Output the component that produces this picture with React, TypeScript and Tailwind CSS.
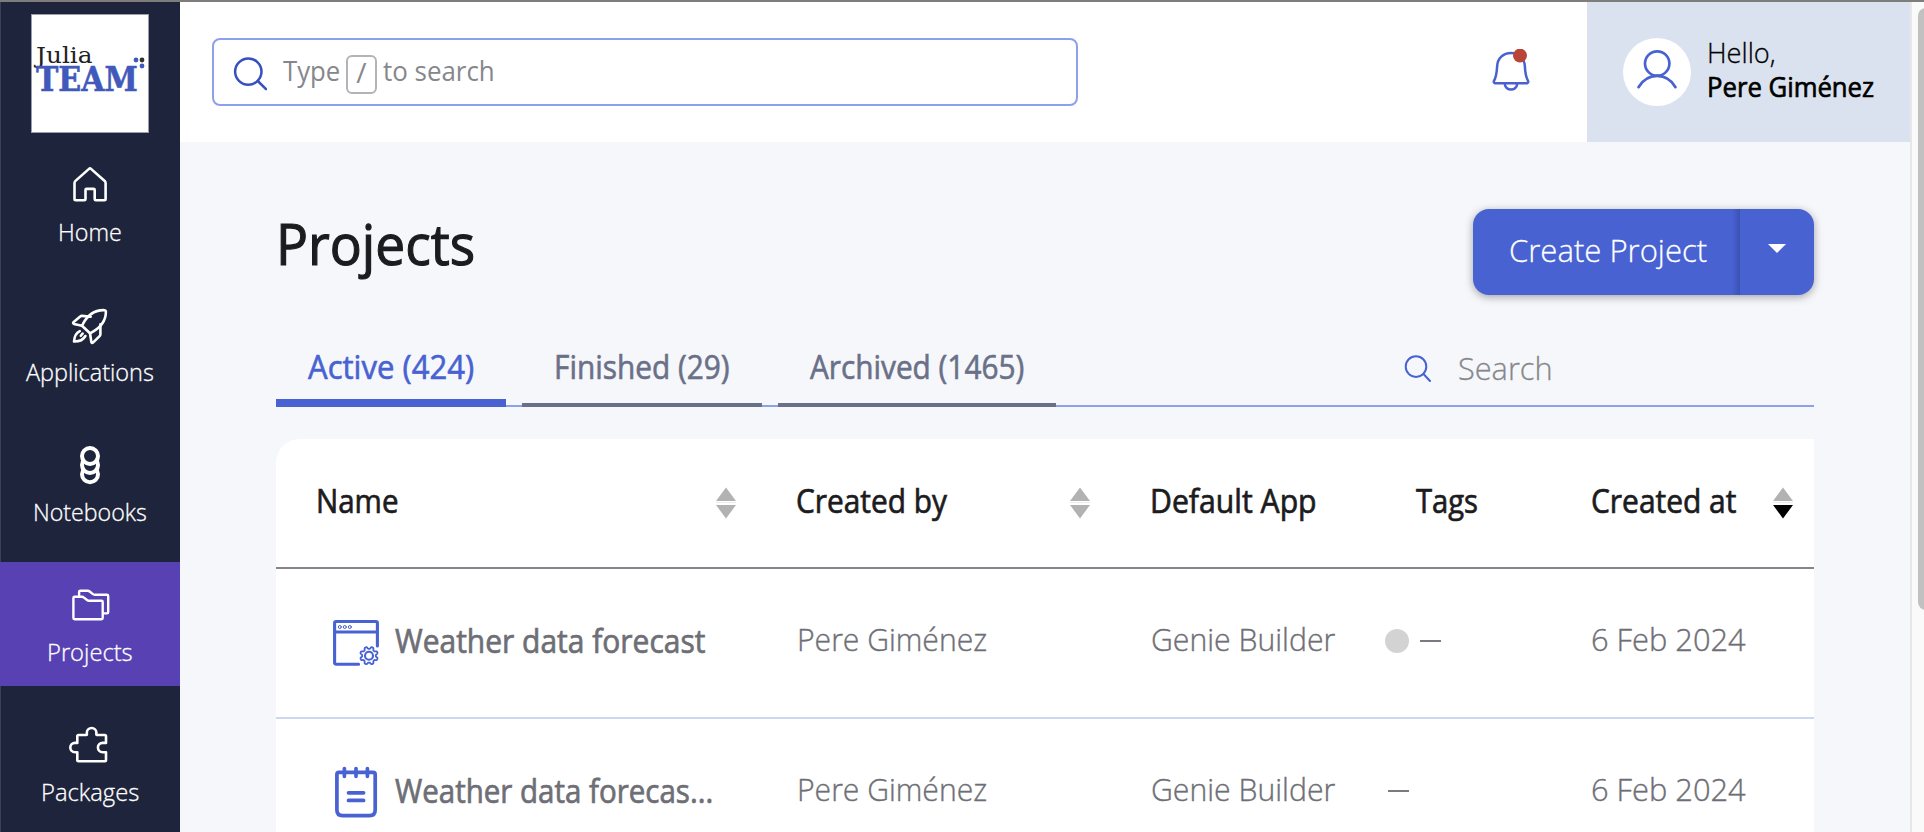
import { useLayoutEffect, useRef, type ReactNode } from "react";
import clsx from "clsx";

/** One line of text squeezed horizontally to the width of its box. */
function Fit({ children, className }: { children: string; className?: string }) {
  const box = useRef<HTMLSpanElement>(null);
  const text = useRef<HTMLSpanElement>(null);
  useLayoutEffect(() => {
    if (!box.current || !text.current) return;
    const ratio = box.current.clientWidth / text.current.offsetWidth;
    text.current.style.transform = `scaleX(${ratio})`;
  }, [children]);
  return (
    <span ref={box} className={clsx("block shrink-0 whitespace-nowrap", className)}>
      <span ref={text} className="inline-block origin-left">{children}</span>
    </span>
  );
}

function Stroke({ className, children, width = 2.6 }: { className: string; children: ReactNode; width?: number }) {
  return (
    <svg className={clsx("block shrink-0", className)} fill="none" stroke="currentColor" strokeWidth={width} strokeLinecap="round" strokeLinejoin="round">
      {children}
    </svg>
  );
}

const HomeIcon = () => (
  <Stroke className="h-10 w-10">
    <path d="M4.5 19Q4.5 17.8 5.5 16.9L19 4.9Q20 4 21 4.9L34.7 16.9Q35.6 17.8 35.6 19V35Q35.6 36.2 34.4 36.2H25.8Q24.7 36.2 24.7 35V26Q24.7 24.9 23.6 24.9H16.6Q15.5 24.9 15.5 26V35Q15.5 36.2 14.4 36.2H5.7Q4.5 36.2 4.5 35Z" />
  </Stroke>
);

const RocketIcon = () => (
  <Stroke className="mt-[2px] h-10 w-10">
    <path d="M12 19.7C16.5 10.5 24 3.7 34.6 4.2Q35.8 4.3 35.9 5.5C36 15 30 22.3 20 27.3Z" />
    <path d="M20.7 10.7L12.2 9.9Q11 9.8 10.2 10.6L3.4 16.3Q2.6 17.3 3.9 17.9L12 19.7M30.4 18.3V28.2Q30.4 29.4 29.6 30.2L23 36.6Q22 37.4 21.4 36.2L20 27.3" />
    <path d="M9.8 25.2C5.6 27.2 4.3 31 4 35.5C9 35.6 13.2 33.9 15.4 30M10.8 29.8L12.6 27.6" />
  </Stroke>
);

const NotebookIcon = () => (
  <Stroke className="mt-[1px] h-10 w-10" width={4}>
    <circle cx="20" cy="29.3" r="8" fill="#1d243b" />
    <circle cx="20" cy="20" r="8" fill="#1d243b" />
    <circle cx="20" cy="11" r="8" fill="#1d243b" />
  </Stroke>
);

const FoldersIcon = () => (
  <Stroke className="mt-[3px] h-10 w-10" width={2.4}>
    <path d="M4.6 9.7H11.8Q13 9.7 14 10.6L17 13Q18 13.8 19.3 13.8H31.6Q32.7 13.8 32.7 15V31Q32.7 32.2 31.5 32.2H4.6Q3.4 32.2 3.4 31V10.9Q3.4 9.7 4.6 9.7Z" />
    <path d="M9.1 9V4.9Q9.1 3.7 10.3 3.7H17.8Q18.8 3.7 19.7 4.5L22.6 6.9Q23.5 7.7 24.8 7.7H37Q38.2 7.7 38.2 8.9V25.2Q38.2 26.4 37 26.4H34" />
  </Stroke>
);

const PuzzleIcon = () => (
  <Stroke className="-ml-1 -mt-[1px] h-11 w-11">
    <path d="M11.3 13.2Q11.3 12 12.5 12H20.3C21.3 12 20.8 10.5 20.8 9.8A4.8 4.8 0 0 1 30.4 9.8C30.4 10.5 30 12 31 12H38.8Q40 12 40 13.2V19.9H36.6A4.7 4.7 0 0 0 36.6 29.3H40V37.1Q40 38.3 38.8 38.3H12.5Q11.3 38.3 11.3 37.1V29.3H9A4.7 4.7 0 0 1 9 19.9H11.3Z" />
  </Stroke>
);

const gear = Array.from({ length: 97 }, (_, i) => {
  const a = (i / 96) * Math.PI * 2;
  const r = 7.9 + 1.1 * Math.tanh(2 * Math.cos(8 * (a - Math.PI / 8)));
  return `${i ? "L" : "M"}${(39 + r * Math.cos(a)).toFixed(2)} ${(40.7 + r * Math.sin(a)).toFixed(2)}`;
}).join("");

const AppIcon = () => (
  <Stroke className="h-14 w-14 text-[#4862d2]" width={3.1}>
    <path d="M47.4 31V8.1Q47.4 6.5 45.8 6.5H6.2Q4.6 6.5 4.6 8.1V47.6Q4.6 49.2 6.2 49.2H28.6M4.6 17H47.4" />
    <g strokeWidth="1"><circle cx="9.8" cy="12" r="1.5" /><circle cx="14.8" cy="12" r="1.5" /><circle cx="19.8" cy="12" r="1.5" /></g>
    <path d={gear} strokeWidth="1.8" />
    <circle cx="39" cy="40.7" r="4" strokeWidth="2.1" />
  </Stroke>
);

const NoteIcon = () => (
  <Stroke className="h-14 w-14 text-[#4862d2]" width={3.7}>
    <path d="M9 10.3H43Q45.2 10.3 45.2 12.5V48Q45.2 53.6 39.6 53.6H12.6Q6.9 53.6 6.9 48V12.5Q6.9 10.3 9 10.3ZM14.4 6.6V14.3M26 6.6V14.3M37.4 6.6V14.3M18.5 30.8H33.6M18.5 38.4H33.6" />
  </Stroke>
);

function Sort({ active }: { active?: boolean }) {
  return (
    <svg className="mt-1 h-8 w-[22px] shrink-0">
      <path d="M11 0.5L21 14H1Z" fill="#b2b2b2" />
      <path d="M1 15.5H21" stroke="#ececec" />
      <path d="M11 31.5L21 18H1Z" fill={active ? "#000" : "#b2b2b2"} />
    </svg>
  );
}

const nav = [
  { label: "Home", icon: <HomeIcon />, width: "w-[64px]" },
  { label: "Applications", icon: <RocketIcon />, width: "w-[128px]" },
  { label: "Notebooks", icon: <NotebookIcon />, width: "w-[114px]" },
  { label: "Projects", icon: <FoldersIcon />, width: "w-[86px]", active: true },
  { label: "Packages", icon: <PuzzleIcon />, width: "w-[98px]" },
];

function Sidebar() {
  return (
    <aside className="flex w-[180px] shrink-0 flex-col items-center bg-[#1d243b] pt-3 text-white shadow-[inset_1px_0_#3a4157]">
      <div className="relative mb-[9px] h-[119px] w-[118px] shrink-0 border border-[#9a9dab] bg-white pl-1 pt-[26px] font-['DejaVu_Serif',serif]">
        <Fit className="w-14 text-[23px] leading-7 text-[#222]">Julia</Fit>
        <Fit className="-mt-[5px] w-[102px] text-[33px] font-bold leading-8 text-[#4059ba] [-webkit-text-stroke:0.6px]">TEAM</Fit>
        <svg className="absolute right-[3px] top-[42px] h-3 w-3">
          <circle cx="3" cy="3" r="2.4" fill="#4059ba" /><circle cx="9" cy="3" r="2.4" fill="#333" /><circle cx="9" cy="9" r="2.4" fill="#4059ba" />
        </svg>
      </div>
      <nav className="flex w-full flex-col gap-4">
        {nav.map((n) => (
          <a key={n.label} className={clsx("flex h-[124px] shrink-0 flex-col items-center", n.active && "bg-[#5741b3]")}>
            <span className="mt-[22px] flex h-[52px] items-start">{n.icon}</span>
            <Fit className={clsx("text-2xl font-light leading-8 [-webkit-text-stroke:0.3px]", n.width)}>{n.label}</Fit>
          </a>
        ))}
      </nav>
    </aside>
  );
}

function Header() {
  return (
    <header className="flex h-[140px] shrink-0 items-start bg-white">
      <div className="ml-8 mt-9 flex h-[68px] w-[866px] items-start rounded-lg border-2 border-[#8da0ea] text-[28px] leading-[34px] text-[#86878c]">
        <Stroke className="ml-[17px] mt-4 h-9 w-9 text-[#3650bf]" width={2.5}>
          <circle cx="17.3" cy="15.6" r="13.2" /><path d="M26.8 25L35 33.2" />
        </Stroke>
        <Fit className="ml-[16px] mt-[13px] w-[57px]">Type</Fit>
        <span className="ml-[6px] mt-[15px] flex h-[39px] w-[31px] items-start justify-center rounded-md border-2 border-[#b3b3b8] leading-[31px]">/</span>
        <Fit className="ml-[6px] mt-[13px] w-[112px]">to search</Fit>
      </div>
      <Stroke className="ml-auto mr-[53px] mt-[47px] h-11 w-11 text-[#4862d2]" width={2.5}>
        <path d="M5 34.2Q3.2 33.6 4 31.9C6.4 27.5 6.8 23.5 7.1 17.6C7.5 9.5 13.2 3.9 21 3.9S34.5 9.5 34.9 17.6C35.2 23.5 35.6 27.5 38 31.9Q38.8 33.6 37 34.2ZM14.8 35C15.6 42.4 26.4 42.4 27.2 35" />
        <circle cx="30" cy="6.6" r="7" fill="#b94539" stroke="none" />
      </Stroke>
      <div className="flex h-full w-[323px] items-start bg-[#dbe2ef] pl-[36px] pt-9 text-[28px] leading-[34px] text-black">
        <Stroke className="h-[68px] w-[68px] rounded-full bg-white text-[#4862d2]" width={2.7}>
          <circle cx="34.2" cy="25.5" r="12.2" /><path d="M15.500 49.200C24.500 34.200 43.800 34.200 52.500 49.200" />
        </Stroke>
        <div className="ml-4 -mt-[3px]">
          <Fit className="w-[69px] font-light [-webkit-text-stroke:0.3px]">Hello,</Fit>
          <Fit className="w-[167px] font-medium [-webkit-text-stroke:0.7px]">Pere Giménez</Fit>
        </div>
      </div>
    </header>
  );
}

const tabs = [
  { label: "Active (424)", box: "w-[230px] border-b-8 border-[#4862d2] text-[#4862d2]", width: "w-[166px]" },
  { label: "Finished (29)", box: "w-[240px] border-b-4 border-[#6a7088] text-[#6a7088]", width: "w-[176px]" },
  { label: "Archived (1465)", box: "w-[278px] border-b-4 border-[#6a7088] text-[#6a7088]", width: "w-[214px]" },
];

const rows = [
  { name: "Weather data forecast", icon: <AppIcon />, width: "w-[310px]", dot: true },
  { name: "Weather data forecas...", icon: <NoteIcon />, width: "w-[318px]", dot: false },
];

const columns = "grid grid-cols-[481px_354px_237px_203px_263px]";
const cell = "font-light [-webkit-text-stroke:0.4px]";

function Projects() {
  return (
    <main className="flex flex-1 flex-col overflow-hidden pl-24 pr-24 text-[32px] leading-10">
      <div className="mt-[67px] flex h-[86px] shrink-0 items-start justify-between">
        <Fit className="mt-[2px] w-[199px] text-[57px] font-medium leading-[64px] text-[#1c1c1e] [-webkit-text-stroke:1.2px]">Projects</Fit>
        <div className="flex h-[86px] overflow-visible rounded-2xl bg-[#4862d2] text-white shadow-[0_2px_8px_rgba(0,0,0,0.35)]">
          <div className="flex w-[267px] items-start bg-linear-to-r from-transparent from-97% to-[#3b51b4] pl-9 pt-[21px]">
            <Fit className="w-[198px] font-light [-webkit-text-stroke:0.3px]">Create Project</Fit>
          </div>
          <div className="flex w-[74px] justify-center pt-[35px]">
            <svg className="h-[9px] w-[18px]"><path d="M0 0H18L9 9Z" fill="white" /></svg>
          </div>
        </div>
      </div>
      <div className="mt-[52px] flex h-[60px] shrink-0 bg-[linear-gradient(#8da0ea,#8da0ea)] bg-[length:100%_2px] bg-bottom bg-no-repeat">
        <div className="flex gap-4">
          {tabs.map((t) => (
            <div key={t.label} className={clsx("h-[60px] pl-8", t.box)}>
              <Fit className={clsx("font-medium [-webkit-text-stroke:0.6px]", t.width)}>{t.label}</Fit>
            </div>
          ))}
        </div>
        <Stroke className="ml-[348px] mt-[7px] h-7 w-7 text-[#4862d2]" width={2}>
          <circle cx="12" cy="12.6" r="10.3" /><path d="M19.5 20L26 27" />
        </Stroke>
        <Fit className="ml-[26px] mt-[1px] w-[95px] font-light text-[#86878c] [-webkit-text-stroke:0.3px]">Search</Fit>
      </div>
      <div className="mt-8 shrink-0 rounded-tl-3xl bg-white">
        <div className={clsx("h-[130px] border-b-2 border-[#86848a] pt-[42px] font-medium text-[#1c1c1e] [-webkit-text-stroke:0.7px]", columns)}>
          <div className="flex justify-between pl-10 pr-5"><Fit className="w-[82px]">Name</Fit><span className="pt-[2px]"><Sort /></span></div>
          <div className="flex justify-between pl-[39px] pr-5"><Fit className="w-[151px]">Created by</Fit><span className="pt-[2px]"><Sort /></span></div>
          <div className="pl-[39px]"><Fit className="w-[167px]">Default App</Fit></div>
          <div className="pl-[68px]"><Fit className="w-[62px]">Tags</Fit></div>
          <div className="flex justify-between pl-10 pr-5"><Fit className="w-[145px]">Created at</Fit><span className="pt-[2px]"><Sort active /></span></div>
        </div>
        {rows.map((r) => (
          <div key={r.name} className={clsx("h-[150px] border-b-2 border-[#cdd7f2] pt-[50px] text-[#6e6f76]", columns)}>
            <div className="flex pl-[54px]">
              <span className={r.dot ? "-mt-[4px]" : "-mt-[7px]"}>{r.icon}</span>
              <Fit className={clsx("ml-[9px] mt-[2px] font-medium [-webkit-text-stroke:0.7px]", r.width)}>{r.name}</Fit>
            </div>
            <div className="pl-10"><Fit className={clsx("w-[190px]", cell)}>Pere Giménez</Fit></div>
            <div className="pl-10"><Fit className={clsx("w-[184px]", cell)}>Genie Builder</Fit></div>
            <div className="flex h-11 items-center gap-[11px] pl-[37px]">
              {r.dot && <span className="h-6 w-6 rounded-full bg-[#d3d3d3]" />}
              <span className={clsx("h-[2px] w-[21px] bg-[#7a7b81]", !r.dot && "ml-[3px]")} />
            </div>
            <div className="pl-10"><Fit className={clsx("w-[155px]", cell)}>6 Feb 2024</Fit></div>
          </div>
        ))}
      </div>
    </main>
  );
}

export default function App() {
  return (
    <div className="flex h-[832px] w-[1924px] overflow-hidden border-t-2 border-[#7f7c7c] bg-[#f5f7fb] font-['Open_Sans',sans-serif]">
      <Sidebar />
      <div className="flex w-[1730px] shrink-0 flex-col">
        <Header />
        <Projects />
      </div>
      <div className="w-[14px] overflow-hidden border-l-2 border-[#e6e7e9] bg-[#fafafa] pl-[6px] pt-[6px]">
        <div className="h-[602px] w-4 rounded-lg bg-[#c1c1c1]" />
      </div>
    </div>
  );
}
